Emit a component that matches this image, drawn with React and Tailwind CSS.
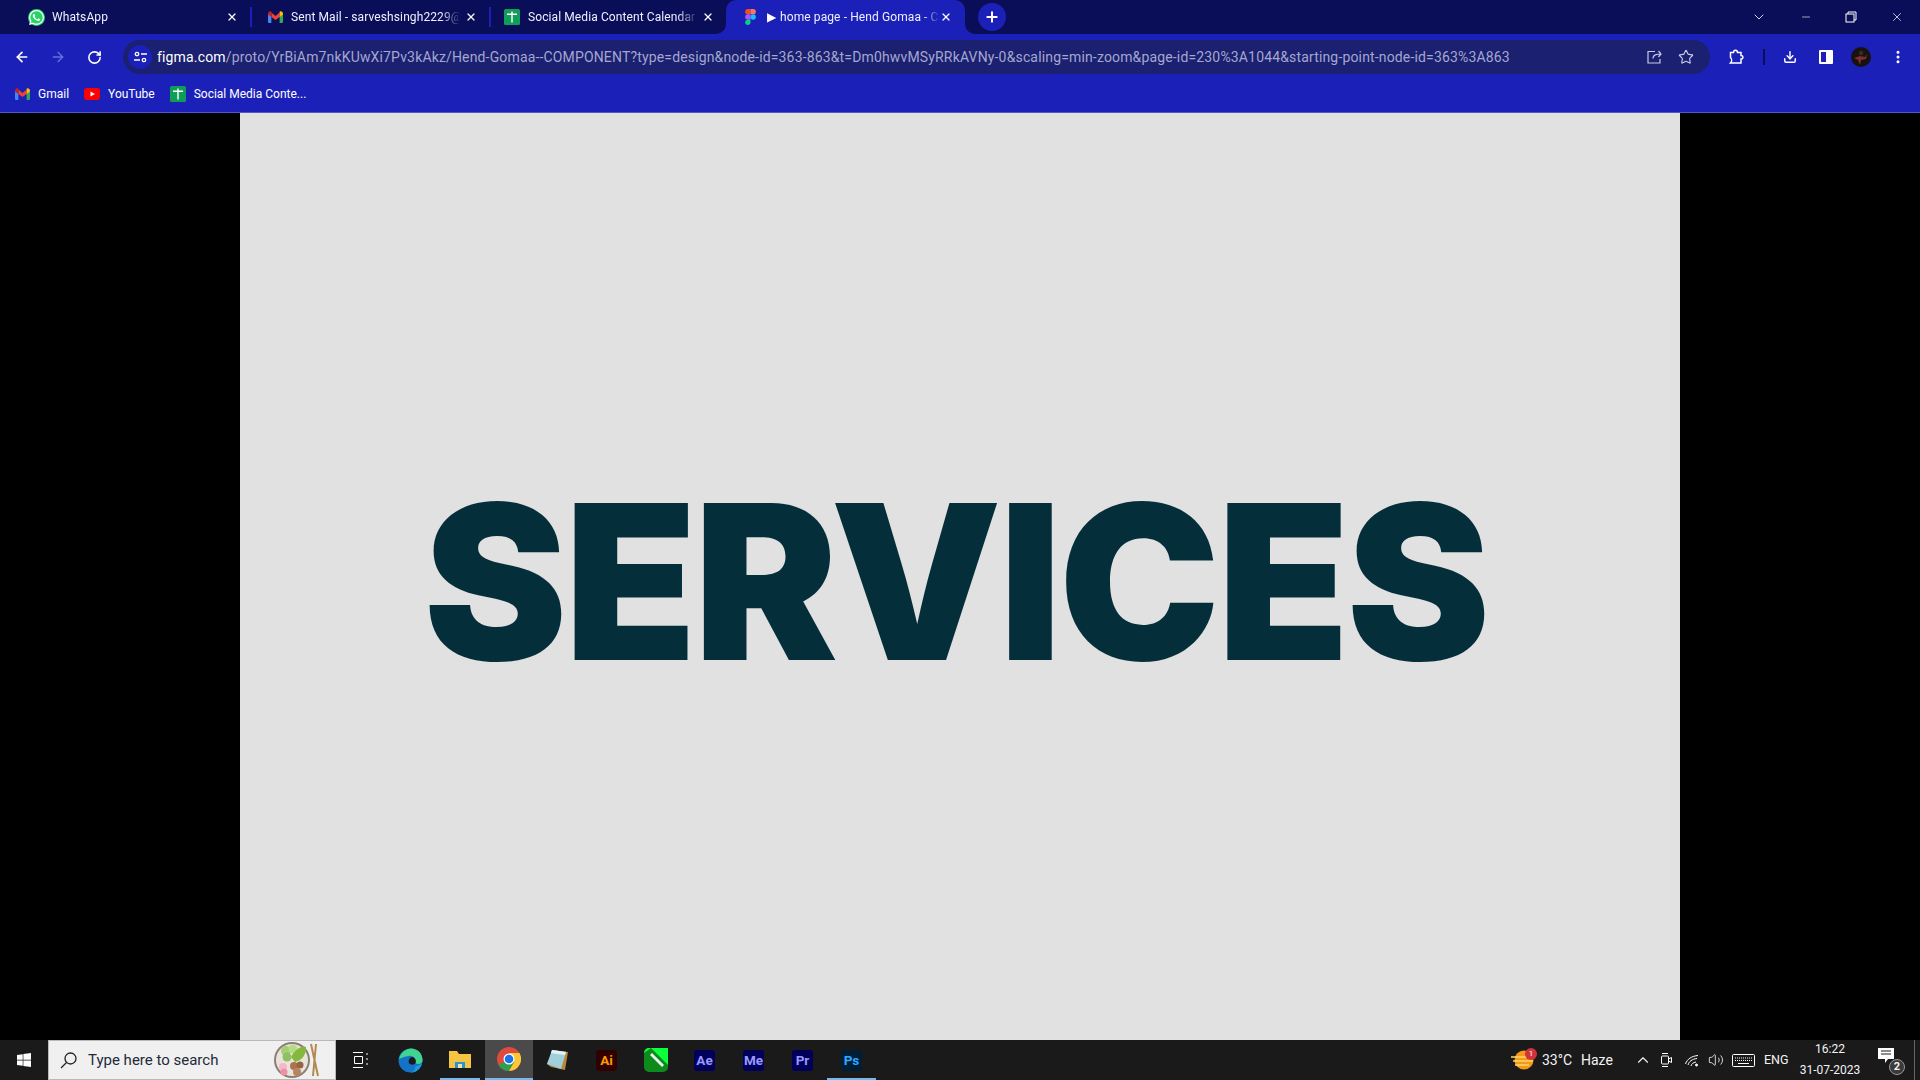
import React from 'react';
import { ArrowLeft, ArrowRight, RotateCw, Star, Download, EllipsisVertical, ChevronDown, ChevronUp, Minus, X, Plus, Volume2 } from 'lucide-react';
import { FaWhatsapp, FaWindows } from 'react-icons/fa';

const GmailIcon = ({ size = 16 }) => (
  <svg width={size} height={size * 0.8} viewBox="0 0 20 16">
    <path d="M0 3v11.5A1.5 1.5 0 0 0 1.500 16H4.500V7z" fill="#4285f4" />
    <path d="M20 3v11.500a1.500 1.500 0 0 1-1.500 1.500H15.500V7z" fill="#34a853" />
    <path d="M4.500 8V2L10 6.500 15.500 2V8L10 12z" fill="#ea4335" />
    <path d="M0 3.500C0 1 2.800 -.5 4.500 1V8L0 4.500z" fill="#c5221f" />
    <path d="M20 3.500C20 1 17.200 -.5 15.500 1V8L20 4.500z" fill="#fbbc04" />
  </svg>
);

const SheetsIcon = () => (
  <svg width="16" height="16" viewBox="0 0 16 16">
    <rect width="16" height="16" rx="1.500" fill="#0f9d58" />
    <path d="M3 4.500h4.300V2.500h1.400v2H13V6H8.700v7.500H7.300V6H3z" fill="#fff" />
  </svg>
);

const FigmaIcon = () => (
  <svg width="11" height="16" viewBox="0 0 12 18">
    <path d="M0 3a3 3 0 0 1 3-3h3v6H3a3 3 0 0 1-3-3z" fill="#f24e1e" />
    <path d="M6 0h3a3 3 0 0 1 0 6H6z" fill="#ff7262" />
    <path d="M0 9a3 3 0 0 1 3-3h3v6H3a3 3 0 0 1-3-3z" fill="#a259ff" />
    <circle cx="9" cy="9" r="3" fill="#1abcfe" />
    <path d="M0 15a3 3 0 0 1 3-3h3v3a3 3 0 0 1-6 0z" fill="#0acf83" />
  </svg>
);

const Tab = ({ icon, title }) => (
  <div className="flex items-center h-[34px] shrink-0 w-[222px]">
    <div className="w-4 flex justify-center shrink-0">{icon}</div>
    <div className="ml-2 w-[170px] overflow-hidden whitespace-nowrap text-[12px] tracking-[0.1px] text-[#eef0ff] [mask-image:linear-gradient(to_right,black_88%,transparent)]">{title}</div>
    <X size={12} strokeWidth={2.500} className="ml-[4px] text-white shrink-0" />
  </div>
);

const Bookmark = ({ icon, label }) => (
  <div className="flex items-center gap-[8px] text-[12px] text-white">
    {icon}
    <span>{label}</span>
  </div>
);

const AppTile = ({ bg, fg, label }) => (
  <div className="w-[49px] h-10 flex items-center justify-center">
    <div className={`w-[21px] h-[21px] rounded-[3px] flex items-center justify-center text-[13.500px] font-bold ${bg} ${fg}`}>{label}</div>
  </div>
);

const Salad = () => (
  <svg width="50" height="38" viewBox="0 0 50 38">
    <circle cx="19" cy="19" r="18" fill="#8c7f75" />
    <circle cx="19" cy="19" r="16" fill="#e8e4dc" />
    <circle cx="13" cy="10" r="5" fill="#a5cf73" />
    <circle cx="20" cy="8" r="4.500" fill="#b7db85" />
    <circle cx="14" cy="16" r="4.500" fill="#8fc063" />
    <path d="M18 16C22 8 30 4 33 6c1 6-4 14-11 15z" fill="#86b83f" />
    <circle cx="10" cy="26" r="4" fill="#f4b8c6" />
    <circle cx="11" cy="31" r="3.500" fill="#f08fa8" />
    <circle cx="21" cy="25" r="4" fill="#a9744f" />
    <circle cx="27" cy="24" r="3.500" fill="#96623f" />
    <circle cx="24" cy="31" r="4" fill="#b98360" />
    <path d="M38 3l7 32M43 3l-3 32" stroke="#b08a4e" strokeWidth="2" />
  </svg>
);

export default function App() {
  return (
    <div className="w-[1920px] h-[1080px] overflow-hidden flex flex-col bg-black font-['Roboto',sans-serif]">
      {/* tab strip */}
      <div className="h-[34px] bg-[#0a0d57] flex items-center pl-[28px] shrink-0">
        <Tab icon={<span className="w-[17px] h-[17px] rounded-full bg-[#25d366] flex items-center justify-center"><FaWhatsapp size={17} className="text-white" /></span>} title="WhatsApp" />
        <div className="w-[2px] h-5 bg-[#1a20b8] mr-[15px]" />
        <Tab icon={<GmailIcon size={15} />} title="Sent Mail - sarveshsingh2229@gmail.com" />
        <div className="w-[2px] h-5 bg-[#1a20b8] mr-[13px]" />
        <Tab icon={<SheetsIcon />} title="Social Media Content Calendar - Google" />
        <div className="relative w-[239px] h-[34px] bg-[#1a20b8] rounded-t-[10px] flex items-center pl-[19px] shrink-0">
          <div className="absolute -left-[10px] bottom-0 w-[10px] h-[10px] bg-[#1a20b8]">
            <div className="w-full h-full bg-[#0a0d57] rounded-br-[10px]" />
          </div>
          <div className="absolute -right-[10px] bottom-0 w-[10px] h-[10px] bg-[#1a20b8]">
            <div className="w-full h-full bg-[#0a0d57] rounded-bl-[10px]" />
          </div>
          <FigmaIcon />
          <div className="ml-[11px] w-[173px] overflow-hidden whitespace-nowrap text-[12px] tracking-[0.1px] text-[#eef0ff] [mask-image:linear-gradient(to_right,black_90%,transparent)]">
            <span className="inline-block w-[13px] text-white">▶</span>home page - Hend Gomaa - COMPONENT
          </div>
          <X size={12} strokeWidth={2.500} className="text-white" />
        </div>
        <div className="ml-[13px] w-7 h-7 rounded-full bg-[#1a20b8] flex items-center justify-center">
          <Plus size={16} strokeWidth={3} className="text-white" />
        </div>
        <div className="ml-auto flex items-center text-white">
          <ChevronDown size={16} strokeWidth={1.250} className="mr-[33px]" />
          <Minus size={12} strokeWidth={1.250} className="mr-[33px]" />
          <svg width="12" height="12" viewBox="0 0 12 12" fill="none" stroke="white" className="mr-[33px]">
            <rect x="1" y="3" width="8" height="8" />
            <path d="M3 3V1h8v8H9" />
          </svg>
          <X size={14} strokeWidth={1.250} className="mr-[16px]" />
        </div>
      </div>

      {/* toolbar */}
      <div className="h-[40px] bg-[#1a20b8] flex items-center shrink-0 pt-[6px]">
        <ArrowLeft size={16} strokeWidth={2.500} className="ml-[14px] text-white" />
        <ArrowRight size={16} strokeWidth={2} className="ml-[20px] text-[#6b70d8]" />
        <RotateCw size={15} strokeWidth={2.500} className="ml-[21px] text-white" />
        <div className="ml-[21px] w-[1587px] h-[34px] rounded-full bg-[#1b2070] flex items-center pl-[5px]">
          <div className="w-6 h-6 rounded-full bg-[#1a20b8] flex items-center justify-center">
            <svg width="13" height="12" viewBox="0 0 13 12" fill="none" stroke="white" strokeWidth="1.300">
              <circle cx="3" cy="3" r="1.700" />
              <path d="M7 3h6M0 9h6" />
              <circle cx="10" cy="9" r="1.700" />
            </svg>
          </div>
          <div className="ml-[5px] text-[14px] tracking-[0.155px] whitespace-nowrap text-[#a4a7cf]">
            <span className="text-white">figma.com</span>/proto/YrBiAm7nkKUwXi7Pv3kAkz/Hend-Gomaa--COMPONENT?type=design&amp;node-id=363-863&amp;t=Dm0hwvMSyRRkAVNy-0&amp;scaling=min-zoom&amp;page-id=230%3A1044&amp;starting-point-node-id=363%3A863
          </div>
          <div className="ml-auto flex items-center text-[#c9cbe6] pr-[16px] gap-[16px]">
            <svg width="15" height="14" viewBox="0 0 15 14" fill="none" stroke="currentColor" strokeWidth="1.200">
              <path d="M8 1.500H1v11.500h12V9M6 8.500c0-3 2-4.500 8-4.500M11.500 1L14 4l-2.500 3" />
            </svg>
            <Star size={16} strokeWidth={1.700} />
          </div>
        </div>
        <svg width="16" height="16" viewBox="0 0 16 16" fill="none" stroke="white" strokeWidth="1.500" className="ml-[19px]">
          <path d="M1.500 3.500h3c0-3 4-3 4 0h3.500v3c2.500 0 2.500 3.500 0 3.500v4H1.500c1.500-1.500 1.500-4 0-5.500z" />
        </svg>
        <div className="ml-[18px] w-[2px] h-4 bg-[#0a0d57]" />
        <Download size={14} strokeWidth={2.500} className="ml-[18px] text-white" />
        <div className="ml-[22px] w-[14px] h-[14px] bg-white rounded-[1px] flex items-center pl-[2px]">
          <div className="w-[5px] h-[10px] bg-[#1a20b8]" />
        </div>
        <svg width="20" height="20" viewBox="0 0 20 20" className="ml-[18px]">
          <circle cx="10" cy="10" r="10" fill="#17120f" />
          <path d="M3 11l6-2 5 1 2-3-1 5-5 1-1 5-2-5z" fill="#7a2f2a" />
          <circle cx="10" cy="6" r="2.200" fill="#3a2a28" />
        </svg>
        <EllipsisVertical size={16} strokeWidth={2.500} className="ml-[19px] text-white" />
      </div>

      {/* bookmarks */}
      <div className="h-[39px] bg-[#1a20b8] flex items-center pl-[15px] gap-[15px] shrink-0 border-b border-[#5257cf] pt-[2px]">
        <Bookmark icon={<GmailIcon size={15} />} label="Gmail" />
        <Bookmark icon={<svg width="16" height="12" viewBox="0 0 16 12"><rect width="16" height="12" rx="3" fill="#f00" /><path d="M6.500 3.500v5L11 6z" fill="#fff" /></svg>} label="YouTube" />
        <Bookmark icon={<SheetsIcon />} label="Social Media Conte..." />
      </div>

      {/* prototype canvas */}
      <div className="flex-1 bg-black flex justify-center">
        <div className="w-[1440px] bg-[#e1e1e1] flex items-center justify-center pt-[10px] pr-[9px]">
          <h1 className="font-['Inter',sans-serif] font-black text-[216px] leading-none tracking-[-3px] text-[#052e3b]">SERVICES</h1>
        </div>
      </div>

      {/* windows taskbar */}
      <div className="h-10 bg-[#1a1a1a] flex items-center shrink-0 text-white">
        <div className="w-12 flex justify-center">
          <FaWindows size={16} className="text-white" />
        </div>
        <div className="w-[288px] h-10 bg-[#f0f0f0] border border-[#b9b9b9] flex items-center pl-[11px]">
          <svg width="17" height="17" viewBox="0 0 17 17" fill="none" stroke="#222" strokeWidth="1.300">
            <circle cx="10.500" cy="6.500" r="5.500" />
            <path d="M6.500 10.500L1 16" />
          </svg>
          <span className="ml-[11px] text-[15px] text-[#1f2a3a]">Type here to search</span>
          <div className="ml-auto mr-[12px]"><Salad /></div>
        </div>
        <div className="w-[49px] flex justify-center">
          <svg width="16" height="16" viewBox="0 0 16 16" fill="none" stroke="white">
            <path d="M0 .5h10M0 15.500h10M1.500 4.500h8v7h-8zM13 2h2M13 7h2M13 12h2" />
          </svg>
        </div>
        <div className="w-[50px] flex justify-center">
          <svg width="25" height="25" viewBox="0 0 25 25">
            <circle cx="12.500" cy="12.500" r="12" fill="#1273c9" />
            <path d="M1 11C3 3 10 0 14 .5 20 1 25 6 24.500 13c-.5 3-5 4-7 2 1-5-3-8-7-7-4 .5-7 2-9.500 3z" fill="#3fd58e" />
            <path d="M17.500 15c-1 2-5 2.500-6.500 0-1-2 0-5 3-6 2.500 0 4.500 3 3.500 6z" fill="#1a1a1a" />
            <path d="M24 16c-2 6-7 8.500-11 8.500 3-1 4-3 4.500-6z" fill="#1e9ad6" />
          </svg>
        </div>
        <div className="w-[50px] h-10 flex justify-center">
          <div className="w-10 h-10 flex justify-center items-center border-b-[2px] border-[#76b9ed]">
            <svg width="22" height="18" viewBox="0 0 22 18">
              <path d="M0 1h8l2 3h12v14H0z" fill="#f5c443" />
              <path d="M6 12h10v6H6z" fill="#2a93d5" />
              <path d="M9 14h4v4H9z" fill="#f5e2a1" />
            </svg>
          </div>
        </div>
        <div className="w-[48px] h-10 bg-[#4a4a4a] flex justify-center items-center border-b-[2px] border-[#76b9ed]">
          <svg width="24" height="24" viewBox="0 0 24 24">
            <circle cx="12" cy="12" r="12" fill="#dd4b3e" />
            <path d="M12 12L1.600 18A12 12 0 0 0 12 24l5.200-9z" fill="#2f9e4f" />
            <path d="M12 6h10.400A12 12 0 0 1 12 24l5.200-9z" fill="#fcc934" />
            <circle cx="12" cy="12" r="5.500" fill="#fff" />
            <circle cx="12" cy="12" r="4.300" fill="#1a73e8" />
          </svg>
        </div>
        <div className="w-[49px] flex justify-center">
          <svg width="24" height="24" viewBox="0 0 24 24">
            <path d="M7 2l15 2-3 18-14-3-4-3z" fill="#b58a3d" />
            <path d="M6 2l14 2-5 17L1 16z" fill="#9fd0dc" />
            <path d="M6 2l14 2-1 3-14-2z" fill="#e4f2f5" />
          </svg>
        </div>
        <AppTile bg="bg-[#300000]" fg="text-[#ff9a00]" label="Ai" />
        <div className="w-[49px] flex justify-center">
          <svg width="24" height="24" viewBox="0 0 24 24">
            <rect width="24" height="24" rx="5" fill="#0c8a1c" />
            <path d="M0 5a5 5 0 0 1 5-5h19v17L7 0z" fill="#0bff3c" />
            <path d="M6 7l2-2 12 12-2 2z" fill="#e9f5e9" />
          </svg>
        </div>
        <AppTile bg="bg-[#00005b]" fg="text-[#9999ff]" label="Ae" />
        <AppTile bg="bg-[#00005b]" fg="text-[#9999ff]" label="Me" />
        <AppTile bg="bg-[#00005b]" fg="text-[#9999ff]" label="Pr" />
        <div className="border-b-[2px] border-[#76b9ed] h-10">
          <AppTile bg="bg-[#001e36]" fg="text-[#31a8ff]" label="Ps" />
        </div>

        {/* tray */}
        <div className="ml-auto flex items-center text-[#f2f2f2] pr-[5px]">
          <div className="relative w-[24px] h-[20px] mr-[7px]">
            <svg width="24" height="20" viewBox="0 0 24 20">
              <circle cx="13" cy="10" r="9.500" fill="#f49a18" />
              <path d="M0 7h20M2 11h20M4 15h14" stroke="#ffd66b" strokeWidth="1.500" />
            </svg>
            <span className="absolute -top-[2px] -right-[2px] w-3 h-3 rounded-full bg-[#d13438] text-[8px] leading-3 text-center text-white">1</span>
          </div>
          <span className="text-[14px] w-[39px] whitespace-nowrap">33°C</span>
          <span className="text-[14px] w-[53px]">Haze</span>
          <ChevronUp size={18} strokeWidth={1.500} className="mr-[8px]" />
          <svg width="12" height="16" viewBox="0 0 12 16" fill="none" stroke="white" className="mr-[13px]">
            <rect x="1.500" y="4" width="7" height="8" rx="1" />
            <path d="M8.500 7l3-1.500v5l-3-1.500M2 1.500h6M2 14.500h6" />
          </svg>
          <svg width="14" height="14" viewBox="0 0 14 14" fill="none" stroke="white" className="mr-[9px]">
            <path d="M.5 11C2 6 7 3 13 2.500M3 12c1-3.500 4-6 9-6.500M6 13c.5-2 2-3.500 5-4" />
            <circle cx="11.500" cy="12" r="1" fill="white" />
          </svg>
          <Volume2 size={16} strokeWidth={1.300} className="mr-[8px]" />
          <svg width="23" height="13" viewBox="0 0 23 13" fill="none" stroke="white" className="mr-[9px]">
            <rect x=".5" y=".5" width="22" height="12" rx="1" />
            <path d="M3 4h17M3 6.500h17" strokeDasharray="1 1" />
            <path d="M6 9.500h11" />
          </svg>
          <span className="text-[12.500px] w-[23px] mr-[13px]">ENG</span>
          <div className="flex flex-col items-center text-[12px] leading-[21px] w-[60px] whitespace-nowrap">
            <span>16:22</span>
            <span>31-07-2023</span>
          </div>
          <div className="relative w-[28px] h-[28px] ml-[17px] mr-[9px] mt-[2px]">
            <svg width="18" height="17" viewBox="0 0 18 17" className="absolute left-0 top-0">
              <path d="M1 1h16v11h-6l-3 4v-4H1z" fill="#fff" />
              <path d="M4 4h10M4 7h10" stroke="#1a1a1a" />
            </svg>
            <span className="absolute right-0 bottom-0 w-[16px] h-[16px] rounded-full bg-[#3a3a3a] border border-[#999] text-[11px] font-bold leading-[14px] text-center">2</span>
          </div>
          <div className="w-px h-10 bg-[#666]" />
        </div>
      </div>
    </div>
  );
}
